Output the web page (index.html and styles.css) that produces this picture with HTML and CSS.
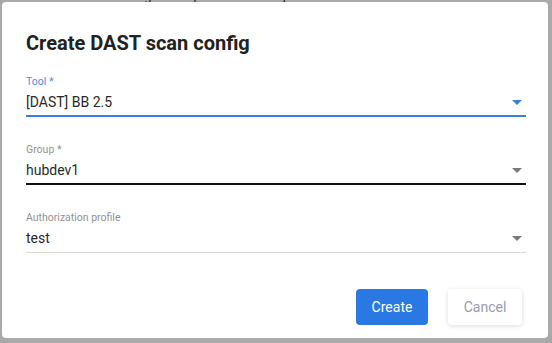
FILE: index.html
```html
<!DOCTYPE html>
<html lang="en">
<head>
    <meta charset="UTF-8">
    <meta name="viewport" content="width=device-width, initial-scale=1.0">
    <title>Create DAST scan config</title>
    <link rel="stylesheet" href="styles.css">
</head>
<body>
    <div class="backdrop">
        <p class="behind-text">ation. No scan tools assigned. Export PDF is not possible</p>
    </div>

    <div class="dialog">
        <h2 class="dialog-title">Create DAST scan config</h2>

        <div class="field field-focused">
            <label class="field-label">Tool *</label>
            <div class="field-input">
                <span class="field-value">[DAST] BB 2.5</span>
                <span class="arrow"></span>
            </div>
        </div>

        <div class="field field-hover">
            <label class="field-label">Group *</label>
            <div class="field-input">
                <span class="field-value">hubdev1</span>
                <span class="arrow"></span>
            </div>
        </div>

        <div class="field">
            <label class="field-label">Authorization profile</label>
            <div class="field-input">
                <span class="field-value">test</span>
                <span class="arrow"></span>
            </div>
        </div>

        <div class="actions">
            <button class="btn btn-primary">Create</button>
            <button class="btn btn-cancel">Cancel</button>
        </div>
    </div>
</body>
</html>
```

FILE: styles.css
```css
html, body {
    margin: 0;
    height: 100%;
}
body {
    font-family: Roboto, "Liberation Sans", sans-serif;
    background-color: #a9a9a9;
    overflow: hidden;
    position: relative;
}
.backdrop {
    height: 100%;
    padding-top: 1px;
    box-sizing: border-box;
}
.behind-text {
    margin: 0;
    margin-top: -12px;
    padding-left: 2px;
    font-size: 13px;
    line-height: 14px;
    color: #222;
}
.dialog {
    position: absolute;
    left: 2px;
    top: 2px;
    width: 546px;
    height: 336px;
    box-sizing: border-box;
    background: #fff;
    border-radius: 4px;
    padding: 29px 22px 0 24px;
}
.dialog-title {
    margin: 0 0 20px 0;
    font-size: 20px;
    font-weight: 700;
    line-height: 24px;
    color: #222;
}
.field {
    margin-bottom: 26px;
}
.field-label {
    display: block;
    font-size: 10.5px;
    line-height: 14px;
    color: #929292;
    margin-bottom: 3px;
}
.field-input {
    display: flex;
    align-items: center;
    justify-content: space-between;
    height: 20px;
    border-bottom: 1px solid #d9d9d9;
    padding-bottom: 4px;
}
.field-value {
    font-size: 14px;
    line-height: 20px;
    color: #2a2a2a;
}
.arrow {
    width: 0;
    height: 0;
    border-left: 5px solid transparent;
    border-right: 5px solid transparent;
    border-top: 5px solid #7a7a7a;
    margin-right: 4px;
}
.field-focused .field-label {
    color: #4a8ee8;
}
.field-focused .field-input {
    border-bottom: 2px solid #3b7fe0;
    padding-bottom: 3px;
}
.field-focused .arrow {
    border-top-color: #3b7fe0;
}
.field-hover .field-input {
    border-bottom: 2px solid #111;
    padding-bottom: 3px;
}
.actions {
    display: flex;
    justify-content: flex-end;
    gap: 20px;
    margin-top: 36px;
    margin-right: 4px;
}
.btn {
    font-family: Roboto, "Liberation Sans", sans-serif;
    font-size: 14px;
    height: 36px;
    border: none;
    border-radius: 4px;
    cursor: pointer;
}
.btn-primary {
    width: 72px;
    background-color: #2a78e4;
    color: #fff;
}
.btn-cancel {
    width: 74px;
    background-color: #fff;
    color: #9a9ab2;
    box-shadow: 0 1px 5px rgba(0, 0, 0, 0.14);
}
```
